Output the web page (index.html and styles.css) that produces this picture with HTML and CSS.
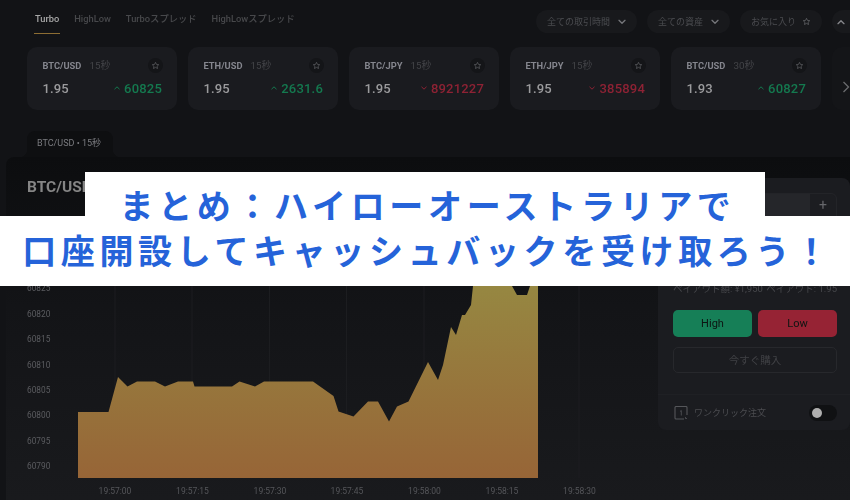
FILE: index.html
```html
<!DOCTYPE html>
<html lang="ja">
<head>
<meta charset="utf-8">
<title>まとめ</title>
<link rel="stylesheet" href="styles.css">
</head>
<body>
<svg class="defs" width="0" height="0" aria-hidden="true">
  <defs>
    <symbol id="star" viewBox="0 0 24 24"><path d="M12 3.500l2.600 5.600 6.100.7-4.500 4.200 1.200 6-5.400-3-5.400 3 1.200-6-4.500-4.200 6.100-.7z" fill="none" stroke="currentColor" stroke-width="2.200" stroke-linejoin="round"/></symbol>
    <symbol id="chev" viewBox="0 0 12 12"><path d="M1.500 3.500L6 8l4.500-4.500" fill="none" stroke="currentColor" stroke-width="2" stroke-linecap="round" stroke-linejoin="round"/></symbol>
    <symbol id="caret-up" viewBox="0 0 8 8"><path d="M1.500 5.200L4 2.800l2.500 2.400" fill="none" stroke="currentColor" stroke-width="1"/></symbol>
    <symbol id="caret-down" viewBox="0 0 8 8"><path d="M1.500 2.800L4 5.200l2.500-2.400" fill="none" stroke="currentColor" stroke-width="1"/></symbol>
  </defs>
</svg>
<div class="app">
  <header class="top">
    <nav class="tabs">
      <a class="tab active">Turbo</a>
      <a class="tab">HighLow</a>
      <a class="tab">Turboスプレッド</a>
      <a class="tab">HighLowスプレッド</a>
    </nav>
    <div class="filters">
      <button class="pill pill-time">全ての取引時間<svg class="ic-chev"><use href="#chev"/></svg></button>
      <button class="pill pill-asset">全ての資産<svg class="ic-chev"><use href="#chev"/></svg></button>
      <button class="pill pill-fav">お気に入り<svg class="ic-star-s"><use href="#star"/></svg></button>
      <button class="pill pill-up"><svg class="ic-chev flip"><use href="#chev"/></svg></button>
    </div>
  </header>

  <section class="cards">
    <article class="card">
      <div class="card-head"><b>BTC/USD</b><span>15秒</span><i class="fav"><svg><use href="#star"/></svg></i></div>
      <div class="card-body"><strong>1.95</strong><em class="up"><svg><use href="#caret-up"/></svg>60825</em></div>
    </article>
    <article class="card">
      <div class="card-head"><b>ETH/USD</b><span>15秒</span><i class="fav"><svg><use href="#star"/></svg></i></div>
      <div class="card-body"><strong>1.95</strong><em class="up"><svg><use href="#caret-up"/></svg>2631.6</em></div>
    </article>
    <article class="card">
      <div class="card-head"><b>BTC/JPY</b><span>15秒</span><i class="fav"><svg><use href="#star"/></svg></i></div>
      <div class="card-body"><strong>1.95</strong><em class="down"><svg><use href="#caret-down"/></svg>8921227</em></div>
    </article>
    <article class="card">
      <div class="card-head"><b>ETH/JPY</b><span>15秒</span><i class="fav"><svg><use href="#star"/></svg></i></div>
      <div class="card-body"><strong>1.95</strong><em class="down"><svg><use href="#caret-down"/></svg>385894</em></div>
    </article>
    <article class="card">
      <div class="card-head"><b>BTC/USD</b><span>30秒</span><i class="fav"><svg><use href="#star"/></svg></i></div>
      <div class="card-body"><strong>1.93</strong><em class="up"><svg><use href="#caret-up"/></svg>60827</em></div>
    </article>
    <article class="card card-ghost"></article>
    <svg class="next" viewBox="0 0 8 14"><path d="M1.500 2l5 5-5 5" fill="none" stroke="currentColor" stroke-width="1.300"/></svg>
  </section>

  <div class="doc-tabs"><span class="doc-tab">BTC/USD • 15秒</span></div>

  <main class="workspace">
    <section class="chart-col">
      <h2 class="chart-title">BTC/USD</h2>
      <svg class="chart" viewBox="6 200 652 300" width="652" height="300">
        <defs>
          <linearGradient id="area" gradientUnits="userSpaceOnUse" x1="0" y1="270" x2="0" y2="478">
            <stop offset="0" stop-color="#968a42"/>
            <stop offset="1" stop-color="#976537"/>
          </linearGradient>
        </defs>
        <g class="grid">
          <line x1="115" y1="270" x2="115" y2="478"/>
          <line x1="192" y1="270" x2="192" y2="478"/>
          <line x1="269.500" y1="270" x2="269.500" y2="478"/>
          <line x1="346.500" y1="270" x2="346.500" y2="478"/>
          <line x1="424" y1="270" x2="424" y2="478"/>
          <line x1="501.500" y1="270" x2="501.500" y2="478"/>
          <line x1="579" y1="270" x2="579" y2="478"/>
        </g>
        <polygon fill="url(#area)" points="78,478 78,412 108.500,412 118,377 127.500,386.500 137,381.500 155,381.500 165,386.500 178,381.500 193,381.500 194.500,386.500 232,386.500 239.500,381.500 255,386.500 264,381.500 313,381.500 333.500,396 338.500,411.500 353.500,416.500 368,401.500 378,401.500 389,421.500 397,406.500 408.500,401.500 428,362 438,380 443,365 451,327 456,335 462,315 465,315 471,305 473,286 476,270 505,270 512,286 517,295 527,295 530,286 538,280 538,478"/>
        <g class="y-axis">
          <text x="27" y="291">60825</text>
          <text x="27" y="316.500">60820</text>
          <text x="27" y="342">60815</text>
          <text x="27" y="367.500">60810</text>
          <text x="27" y="393">60805</text>
          <text x="27" y="418">60800</text>
          <text x="27" y="443.500">60795</text>
          <text x="27" y="469">60790</text>
        </g>
        <g class="x-axis">
          <text x="115" y="493.500">19:57:00</text>
          <text x="192.500" y="493.500">19:57:15</text>
          <text x="270" y="493.500">19:57:30</text>
          <text x="347" y="493.500">19:57:45</text>
          <text x="424.500" y="493.500">19:58:00</text>
          <text x="502" y="493.500">19:58:15</text>
          <text x="579.500" y="493.500">19:58:30</text>
        </g>
      </svg>
    </section>

    <aside class="side">
      <div class="amount"><span class="amount-field"></span><button class="amount-plus">+</button></div>
      <p class="payout"><span>ペイアウト額: ¥1,950</span><span>ペイアウト: 1.95</span></p>
      <div class="trade">
        <button class="btn high">High</button>
        <button class="btn low">Low</button>
      </div>
      <button class="buy">今すぐ購入</button>
      <div class="oneclick">
        <svg class="ic-one" viewBox="0 0 14 14"><path d="M13 9V1.500a1 1 0 0 0-1-1H2a1 1 0 0 0-1 1v10.500a1 1 0 0 0 1 1h8" fill="none" stroke="currentColor" stroke-width="1.100"/><path d="M6 5.500l1.300-1v5M11.500 11v1.500h1.500" fill="none" stroke="currentColor" stroke-width=".8"/></svg>
        <span>ワンクリック注文</span>
        <i class="toggle"><i class="knob"></i></i>
      </div>
    </aside>
  </main>
</div>

<div class="banner">
  <div class="banner-l1">まとめ：ハイローオーストラリアで</div>
  <div class="banner-l2">口座開設してキャッシュバックを受け取ろう！</div>
</div>
</body>
</html>
```

FILE: styles.css
```css
* { box-sizing: border-box; }
html, body { margin: 0; padding: 0; }
body {
  width: 850px;
  height: 500px;
  overflow: hidden;
  position: relative;
  background: #121316;
  font-family: Roboto, "Noto Sans CJK JP", sans-serif;
}
button { font: inherit; border: 0; padding: 0; }
.defs { position: absolute; }

.app {
  width: 850px;
  height: 500px;
  display: flex;
  flex-direction: column;
  background: #121316;
  filter: blur(0.45px);
}

/* top bar */
.top { height: 47px; display: flex; padding-left: 34px; flex: none; }
.tabs { display: flex; gap: 13px; height: 33.500px; padding-top: 12px; }
.tab {
  font-size: 9.300px;
  line-height: 14px;
  color: #47484b;
  padding: 0 1px;
  font-weight: 500;
}
.tab.active { color: #a8a8a8; border-bottom: 1.500px solid #8c6d33; padding-bottom: 6px; height: 21.500px; }
.filters { margin-left: auto; display: flex; gap: 10px; padding-top: 10px; align-items: flex-start; }
.pill {
  height: 23px;
  border-radius: 12px;
  background: #18191c;
  color: #4b4c50;
  font-size: 9px;
  display: flex;
  align-items: center;
  justify-content: space-between;
  padding: 0 11px;
}
.pill-time { width: 101px; }
.pill-asset { width: 83px; }
.pill-fav { width: 82px; }
.pill-up { width: 18px; border-radius: 12px 0 0 12px; justify-content: flex-start; padding: 0 0 0 5px; }
.ic-chev { width: 8px; height: 8px; color: #75767a; flex: none; }
.flip { transform: rotate(180deg); color: #85868a; }
.ic-star-s { width: 9px; height: 9px; color: #5f6064; flex: none; }

/* cards */
.cards { height: 63px; display: flex; gap: 11px; padding-left: 27px; flex: none; position: relative; overflow: hidden; }
.card {
  width: 150px;
  flex: none;
  height: 63px;
  background: #1a1b1f;
  border-radius: 10px;
  padding: 11px 15px 0 15.500px;
}
.card-ghost { opacity: .25; width: 20px; border-radius: 10px 0 0 10px; }
.next { position: absolute; left: 842px; top: 33px; width: 8px; height: 14px; color: #6a6b6e; }
.card-head { display: flex; align-items: center; height: 14px; font-size: 9.300px; }
.card-head b { color: #85868e; font-weight: 700; }
.card-head span { color: #434448; margin-left: 8px; font-size: 9.800px; }
.fav {
  margin-left: auto;
  margin-right: -1px;
  width: 15px;
  height: 15px;
  border-radius: 50%;
  background: #141518;
  display: flex;
  align-items: center;
  justify-content: center;
  color: #55565a;
}
.fav svg { width: 9px; height: 9px; }
.card-body { display: flex; justify-content: space-between; align-items: center; margin-top: 7px; height: 18px; }
.card-body strong { font-size: 13px; font-weight: 500; color: #9b9b9d; letter-spacing: .1px; }
.card-body em { font-style: normal; font-size: 13px; font-weight: 500; display: flex; align-items: center; gap: 3px; letter-spacing: .2px; }
.card-body em svg { width: 8px; height: 8px; }
.up { color: #14794f; }
.down { color: #8e2234; }

/* document tab */
.doc-tabs { margin-top: 21px; height: 26px; padding-left: 27px; flex: none; }
.doc-tab {
  display: block;
  position: relative;
  width: 86px;
  height: 26px;
  background: #0e0f11;
  border-radius: 8px 8px 0 0;
  color: #7b7c80;
  font-size: 9px;
  line-height: 25px;
  padding-left: 10px;
}
.doc-tab::before, .doc-tab::after {
  content: "";
  position: absolute;
  bottom: 0;
  width: 8px;
  height: 8px;
}
.doc-tab::before { left: -8px; background: radial-gradient(circle at 0 0, transparent 8px, #0e0f11 8.500px); }
.doc-tab::after { right: -8px; background: radial-gradient(circle at 100% 0, transparent 8px, #0e0f11 8.500px); }

/* workspace */
.workspace {
  flex: 1;
  margin-left: 6px;
  display: flex;
  border-radius: 8px 0 0 0;
  background: linear-gradient(#0c0d0f 0, #131417 150px, #191a1d 343px);
  min-height: 0;
}
.chart-col { width: 652px; flex: none; }
.chart-title {
  margin: 0;
  height: 43px;
  padding: 21px 0 0 21px;
  font-size: 15.500px;
  line-height: 18px;
  font-weight: 700;
  color: #858585;
}
.chart { display: block; }
.grid line { stroke: #1c1d20; stroke-width: 1; }
.y-axis text { font-size: 8.300px; fill: #5b5c60; font-family: Roboto, sans-serif; }
.x-axis text { font-size: 8.500px; fill: #55565a; text-anchor: middle; font-family: Roboto, sans-serif; }

/* side panel */
.side {
  width: 192px;
  flex: none;
  margin-top: 21px;
  height: 252px;
  background: #1b1c20;
  border-radius: 8px;
  padding: 15px 13px 0 15px;
}
.amount { display: flex; height: 30px; background: #25262a; border-radius: 4px 6px 0 0; border: 1px solid #232428; }
.amount-field { flex: 1; }
.amount-plus { width: 26px; background: #1c1d21; color: #66676b; font-size: 14px; line-height: 22px; height: 28px; padding-bottom: 6px; border-radius: 0 5px 0 0; }
.payout {
  margin: 59px 0 0;
  height: 14px;
  display: flex;
  justify-content: space-between;
  font-size: 9.500px;
  line-height: 14px;
  color: #46474b;
}
.trade { display: flex; gap: 6px; margin-top: 14px; }
.btn { flex: 1; height: 27px; border-radius: 5px; font-size: 11px; color: #0d1512; }
.high { background: #167f57; }
.low { background: #962334; }
.buy {
  display: block;
  width: 100%;
  margin-top: 10px;
  height: 26px;
  border: 1px solid #27282c;
  border-radius: 5px;
  background: transparent;
  color: #404145;
  font-size: 10.500px;
  padding-bottom: 2px;
}
.oneclick {
  margin: 21px -13px 0 -15px;
  padding: 0 13px 0 16px;
  height: 36px;
  border-top: 1px solid #1f2024;
  display: flex;
  align-items: center;
  color: #4b4c50;
  font-size: 9px;
}
.ic-one { width: 14px; height: 14px; margin-right: 6px; flex: none; color: #55565a; }
.toggle {
  margin-left: auto;
  width: 28px;
  height: 16px;
  background: #101113;
  border-radius: 8px;
  display: flex;
  align-items: center;
  padding-left: 2px;
}
.knob { width: 10px; height: 10px; border-radius: 50%; background: #aeaeae; margin-left: 0.500px; }

/* banner */
.banner {
  position: absolute;
  left: 0;
  top: 172px;
  width: 850px;
  display: flex;
  flex-direction: column;
  align-items: center;
  color: #2563d9;
  font-family: "Noto Sans CJK JP", sans-serif;
  font-weight: 700;
  font-size: 34px;
  letter-spacing: 4.650px;
  white-space: nowrap;
  text-align: center;
}
.banner-l1 { position: relative; z-index: 1; width: 680px; height: 44px; line-height: 66px; padding-left: 5px; background: #fff; }
.banner-l2 { width: 850px; height: 70px; line-height: 68px; padding-left: 5px; background: #fff; }
```
